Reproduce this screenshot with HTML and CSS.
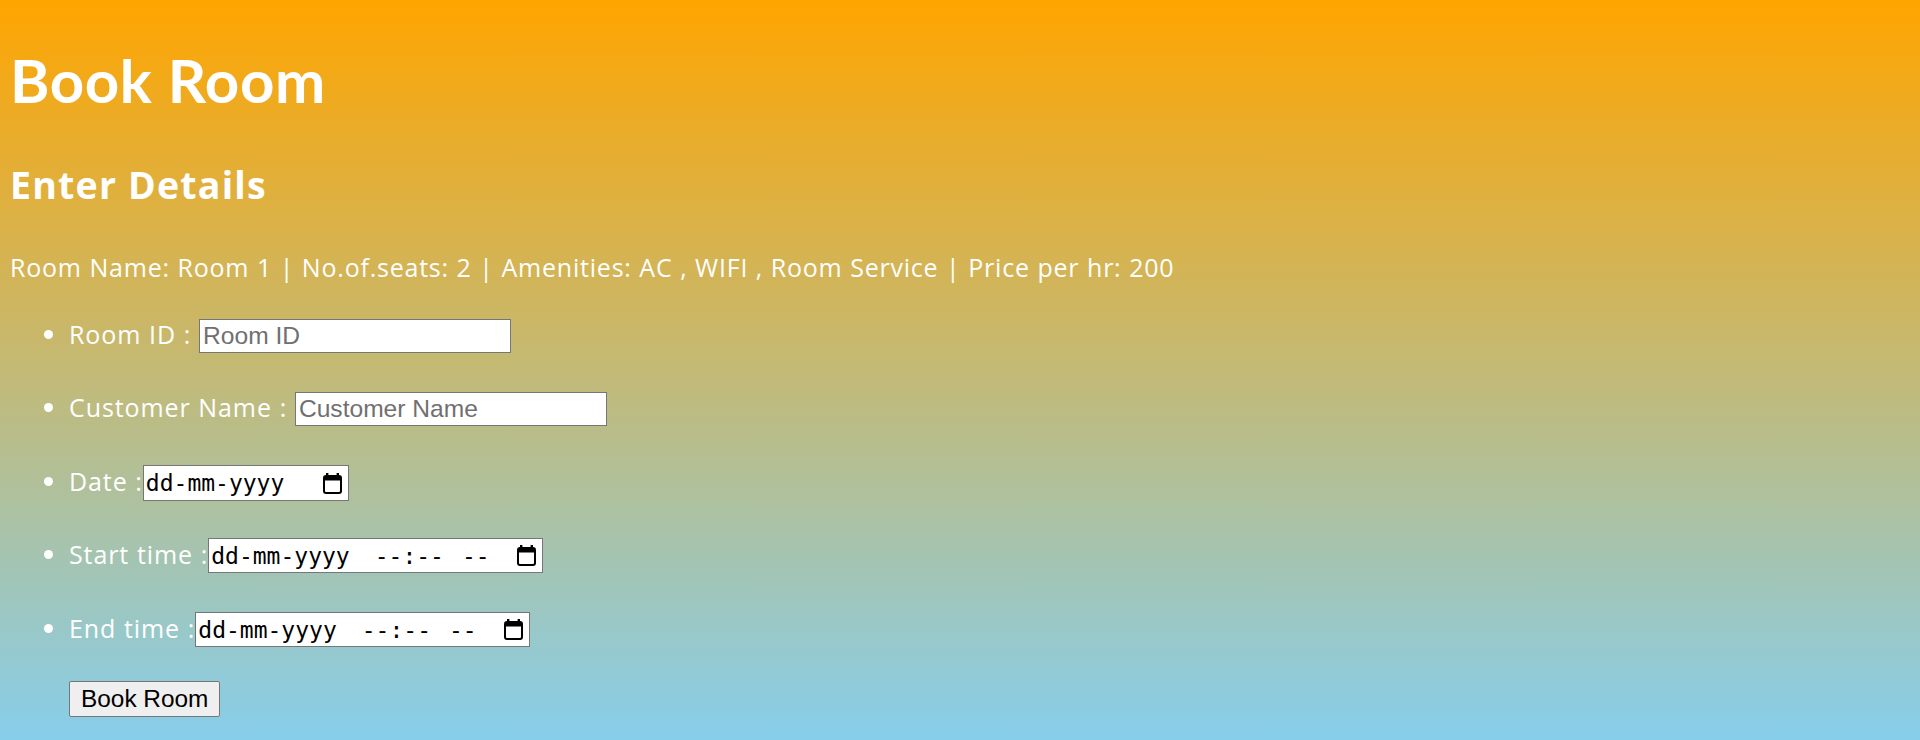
FILE: index.html
```html
<!DOCTYPE html>
<html lang="en">
<head>
<meta charset="utf-8">
<title>Book Room</title>
<link rel="stylesheet" href="styles.css">
</head>
<body>
<h1 class="title">Book Room</h1>
<h2 class="subtitle">Enter Details</h2>
<p class="details">Room Name: Room 1 | No.of.seats: 2 | Amenities: AC , WIFI , Room Service | Price per hr: 200</p>
<form class="form">
  <ul class="fields">
    <li class="field">Room ID : <input class="text-input" type="text" placeholder="Room ID"></li>
    <li class="field">Customer Name : <input class="text-input" type="text" placeholder="Customer Name"></li>
    <li class="field field-date">Date :<span class="date-box date-only"><span class="date-text">dd-mm-yyyy</span><svg class="cal" viewBox="0 0 19 21" width="19" height="21"><rect x="3" y="0" width="2.4" height="4" fill="#000"/><rect x="13.6" y="0" width="2.4" height="4" fill="#000"/><rect x="1" y="3" width="17" height="17" rx="2" fill="none" stroke="#000" stroke-width="2"/><rect x="1" y="3" width="17" height="4.5" fill="#000"/></svg></span></li>
    <li class="field">Start time :<span class="date-box date-time"><span class="date-text">dd-mm-yyyy</span><span class="time-text">--:--</span><span class="ampm-text">--</span><svg class="cal" viewBox="0 0 19 21" width="19" height="21"><rect x="3" y="0" width="2.4" height="4" fill="#000"/><rect x="13.6" y="0" width="2.4" height="4" fill="#000"/><rect x="1" y="3" width="17" height="17" rx="2" fill="none" stroke="#000" stroke-width="2"/><rect x="1" y="3" width="17" height="4.5" fill="#000"/></svg></span></li>
    <li class="field">End time :<span class="date-box date-time"><span class="date-text">dd-mm-yyyy</span><span class="time-text">--:--</span><span class="ampm-text">--</span><svg class="cal" viewBox="0 0 19 21" width="19" height="21"><rect x="3" y="0" width="2.4" height="4" fill="#000"/><rect x="13.6" y="0" width="2.4" height="4" fill="#000"/><rect x="1" y="3" width="17" height="17" rx="2" fill="none" stroke="#000" stroke-width="2"/><rect x="1" y="3" width="17" height="4.5" fill="#000"/></svg></span></li>
  </ul>
  <div class="actions"><button class="submit" type="button">Book Room</button></div>
</form>
</body>
</html>
```
FILE: styles.css
```css
html {
  min-height: 100%;
  background: linear-gradient(#ffa500, #87ceeb);
}
body {
  margin: 10px;
  font-family: "Open Sans", "Noto Sans", sans-serif;
  font-size: 25px;
  line-height: 30px;
  letter-spacing: 0.9px;
  word-spacing: 0.4px;
  color: #fff;
}
.title {
  font-family: "Lato", "Open Sans", sans-serif;
  font-size: 60px;
  line-height: 72px;
  font-weight: 700;
  letter-spacing: 0.6px;
  word-spacing: 0;
  margin: 34px 0 0;
}
.subtitle {
  font-size: 37.5px;
  line-height: 45px;
  font-weight: 700;
  letter-spacing: 1.2px;
  word-spacing: 0;
  margin: 46px 0 0;
}
.details {
  margin: 45px 0 0;
  letter-spacing: 0.78px;
}
.form {
  margin: 37px 0 0;
}
.fields {
  margin: 0;
  padding: 0 0 0 59px;
}
.field {
  margin: 0 0 39px;
}
.field-date {
  margin-bottom: 37px;
}
.field:last-child {
  margin-bottom: 0;
}
.text-input {
  box-sizing: border-box;
  width: 312px;
  height: 34px;
  padding: 0 3px;
  border: 1px solid #767676;
  border-radius: 0;
  background: #fff;
  font-family: "Liberation Sans", Arial, sans-serif;
  font-size: 24.6px;
  letter-spacing: 0;
  word-spacing: 0;
  color: #000;
  vertical-align: baseline;
}
.text-input::placeholder {
  color: #707070;
}
.date-box {
  box-sizing: border-box;
  display: inline-flex;
  align-items: center;
  height: 36px;
  padding: 0 6px 0 2px;
  border: 1px solid #767676;
  background: #fff;
  color: #000;
  font-family: "DejaVu Sans Mono", monospace;
  font-size: 23px;
  line-height: 34px;
  letter-spacing: 0;
  word-spacing: 0;
  white-space: pre;
  vertical-align: baseline;
}
.date-only {
  width: 206px;
}
.date-time {
  width: 335px;
  height: 35px;
}
.time-text {
  margin-left: 25px;
}
.ampm-text {
  margin-left: 18px;
}
.cal {
  margin-left: auto;
  flex: none;
}
.actions {
  padding: 34px 0 0 59px;
}
.submit {
  box-sizing: border-box;
  height: 36px;
  padding: 0 11px;
  border: 1px solid #767676;
  border-radius: 2px;
  background: #efefef;
  color: #000;
  font-family: "Liberation Sans", Arial, sans-serif;
  font-size: 24.4px;
  letter-spacing: 0;
  word-spacing: 0;
}
```
